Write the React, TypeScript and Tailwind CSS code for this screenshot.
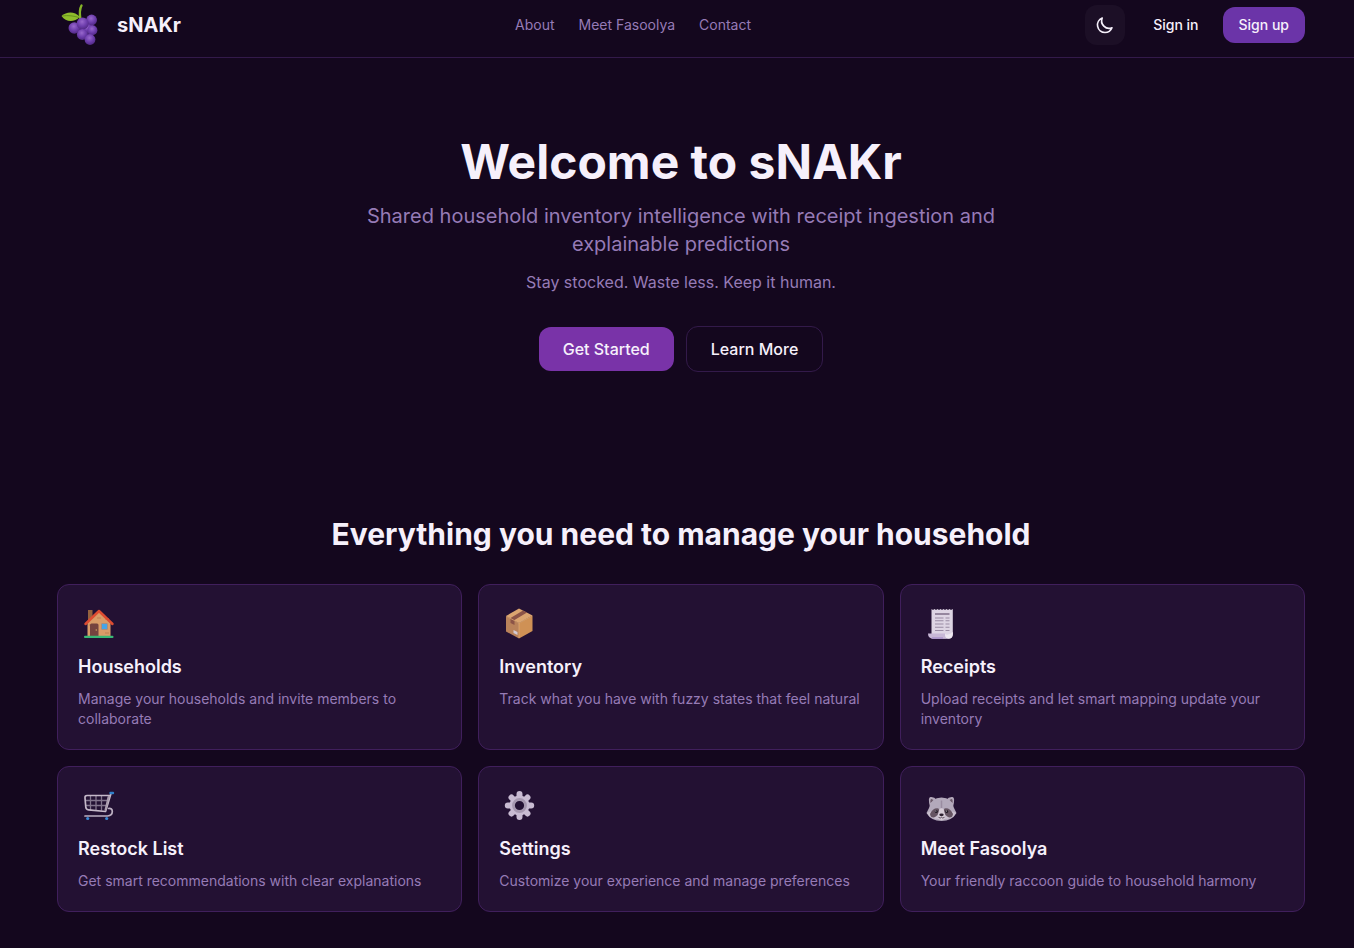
import React from 'react';

interface Feature {
  title: string;
  description: string;
  icon: React.ReactNode;
}

const MoonIcon: React.FC = () => (
  <svg viewBox="0 0 24 24" className="h-5 w-5" fill="none" stroke="currentColor" strokeWidth="2" strokeLinecap="round" strokeLinejoin="round" aria-hidden="true">
    <path d="M20.354 15.354A9 9 0 018.646 3.646 9.003 9.003 0 0012 21a9.003 9.003 0 008.354-5.646z" />
  </svg>
);

const GrapesIcon: React.FC = () => (
  <svg viewBox="0 0 48 48" className="h-12 w-12" aria-hidden="true">
    <defs>
      <radialGradient id="grape" cx="0.45" cy="0.35" r="0.65">
        <stop offset="0" stopColor="#9868cc" />
        <stop offset="0.55" stopColor="#6f3fae" />
        <stop offset="1" stopColor="#512985" />
      </radialGradient>
    </defs>
    <path d="M23.5 19C22.5 13 22.5 8 24.5 4.500" fill="none" stroke="#86b329" strokeWidth="2.4" strokeLinecap="round" />
    <path d="M4.500 15C9 11 17 9.500 23 16C17 21.500 9 21.500 4.500 15Z" fill="#8fbd2c" />
    <path d="M5.500 15C11 14 17 15 22 16.500" fill="none" stroke="#68941c" strokeWidth="1" />
    <path d="M19 24L34 18L38 30L33 40L24 35Z" fill="#4c277c" />
    <g fill="url(#grape)">
      <circle cx="34.600" cy="19" r="5.400" />
      <circle cx="30.500" cy="27.500" r="4.500" />
      <circle cx="35.400" cy="29.300" r="5" />
      <circle cx="17.300" cy="27" r="5.800" />
      <circle cx="25.700" cy="22.500" r="6" />
      <circle cx="25.300" cy="33.500" r="5.400" />
      <circle cx="33" cy="38.500" r="5.400" />
    </g>
  </svg>
);

const HouseIcon: React.FC = () => (
  <svg viewBox="0 0 42 36" className="h-9 w-[42px]" aria-hidden="true">
    <rect x="10" y="5" width="4.500" height="12" fill="#94623f" />
    <path d="M9.500 18L21 6L32.500 18V31H9.500Z" fill="#d99c68" />
    <path d="M11 20h4M27 14h4M27 28h4M19 13h4" stroke="#bd8053" strokeWidth="1" />
    <path d="M7.500 19L21 6L34.500 19" fill="none" stroke="#dd4c31" strokeWidth="2.500" strokeLinecap="round" strokeLinejoin="round" />
    <path d="M12 31V20Q12 18.500 13.500 18.500H19Q20.500 18.500 20.500 20V31Z" fill="#75433f" />
    <circle cx="18.300" cy="25" r="0.800" fill="#cfa15f" />
    <rect x="23.500" y="18.500" width="6" height="6" rx="0.500" fill="#46a5e8" stroke="#b28872" strokeWidth="0.800" />
    <rect x="6" y="30.800" width="29.500" height="2.200" rx="1" fill="#39b875" />
  </svg>
);

const PackageIcon: React.FC = () => (
  <svg viewBox="0 0 42 36" className="h-9 w-[42px]" aria-hidden="true">
    <path d="M20 3.500L33.500 10.500L20 18L7 11Z" fill="#dba570" />
    <path d="M7 11L20 18V33.500L7 26.500Z" fill="#b9825a" />
    <path d="M33.500 10.500L20 18V33.500L33.500 26Z" fill="#cf9155" />
    <path d="M24 5.500L28 7.500L15.500 15V20L11.500 18V13Z" fill="#8c5447" />
    <path d="M20 18V33M7.500 11.300L20 18L33 11" fill="none" stroke="#e0ac76" strokeWidth="0.700" />
    <path d="M14.500 25L18.500 27V30L14.500 28Z" fill="#d4cbd5" />
  </svg>
);

const ReceiptIcon: React.FC = () => (
  <svg viewBox="0 0 42 36" className="h-9 w-[42px]" aria-hidden="true">
    <path d="M10.500 4L12 5L13.500 4L15 5L16.500 4L18 5L19.500 4L21 5L22.500 4L24 5L25.500 4L27 5L28.500 4L30 5L31.800 4V29Q31.800 33.500 28 33.500H10.500Z" fill="#ded5e4" />
    <path d="M7 28.500H24Q23.500 33.800 28 33.800H12Q7 33.500 7 28.500Z" fill="#c8b8d6" />
    <path d="M24 29Q27 31 32 27Q32 33.800 28 33.800Q24 33.500 24 29Z" fill="#eee8f1" />
    <path d="M14 9H28.500" stroke="#7e6c88" strokeWidth="1.500" />
    <path d="M14 13H22.500M24.500 13H28.500M14 15.800H22.500M24.500 15.800H28.500M14 19H22.500M24.500 19H28.500M14 22.300H22.500M24.500 22.300H28.500M14 25.500H22.500M24.500 25.500H28.500" stroke="#998ba3" strokeWidth="1.100" />
    <path d="M11 33H22" stroke="#a48ac8" strokeWidth="1.200" />
  </svg>
);

const CartIcon: React.FC = () => (
  <svg viewBox="0 0 42 36" className="h-9 w-[42px]" aria-hidden="true">
    <g fill="none" strokeLinecap="round" strokeLinejoin="round">
      <path d="M12.500 9V23M18 9V23M23.500 9V23M8 13.500H30M8 18.500H29" stroke="#81748c" strokeWidth="1.300" />
      <path d="M31.500 8.500H9Q6.800 8.500 7 11L7.800 20Q8 22.500 10.500 22.800L27.500 24.500L33 6.500" stroke="#c5b9c9" strokeWidth="1.700" />
      <path d="M30.500 10L27.500 23" stroke="#a99bad" strokeWidth="2" />
      <path d="M7 29H29.500Q34.300 28.500 34.300 24.500Q34.300 21 30.500 21.500" stroke="#bcb0c2" strokeWidth="1.700" />
    </g>
    <path d="M32.500 6H35" stroke="#3281ca" strokeWidth="2.400" strokeLinecap="round" />
    <circle cx="9.700" cy="31.500" r="1.600" fill="#3988d4" />
    <circle cx="28.700" cy="31.500" r="1.600" fill="#3988d4" />
  </svg>
);

const GearIcon: React.FC = () => (
  <svg viewBox="0 0 42 36" className="h-9 w-[42px]" aria-hidden="true">
    <g stroke="#c8bbd2" strokeWidth="6" strokeLinecap="round">
      <path d="M20.500 7V30M8.800 18.500H32.200M12.500 10.500L28.500 26.500M28.500 10.500L12.500 26.500" />
    </g>
    <circle cx="20.500" cy="18.500" r="10" fill="#c8bbd2" />
    <circle cx="20.500" cy="18.500" r="6" fill="#231133" stroke="#a597af" strokeWidth="2.800" />
  </svg>
);

const RaccoonIcon: React.FC = () => (
  <svg viewBox="0 0 42 36" className="h-9 w-[42px]" aria-hidden="true">
    <path d="M9 20Q6.500 10 9.500 10Q13 9.500 16 13ZM32 20Q34.500 10 31.500 10Q28 9.500 25 13Z" fill="#b4a9bb" />
    <path d="M9.500 16Q9 12 10.500 12L13.500 13.500ZM31.500 16Q32 12 30.500 12L27.500 13.500Z" fill="#6b5969" />
    <path d="M20.500 10.500Q31 10.500 33 21L35.500 26Q31 34 20.500 34Q10 34 5.500 26L8 21Q10 10.500 20.500 10.500Z" fill="#b3a9bb" />
    <path d="M6 26Q10 23 14 25L18 32Q9 32 6 26ZM35 26Q31 23 27 25L23 32Q32 32 35 26Z" fill="#c9bfce" />
    <path d="M17.500 21.500Q12 20.500 9 27Q9.500 31 13 30.500Q18 28 18.500 23.500ZM23.500 21.500Q29 20.500 32 27Q31.500 31 28 30.500Q23 28 22.500 23.500Z" fill="#655462" />
    <path d="M20.500 13.500V21" stroke="#9a8ca1" strokeWidth="1.500" />
    <path d="M18.500 22Q20.500 20.500 22.500 22L24 27Q26 32.500 20.500 33Q15 32.500 17 27Z" fill="#d5cbd6" />
    <circle cx="15.300" cy="24.500" r="1.500" fill="#211925" />
    <circle cx="25.700" cy="24.500" r="1.500" fill="#211925" />
    <circle cx="14.900" cy="24" r="0.500" fill="#fff" />
    <circle cx="25.300" cy="24" r="0.500" fill="#fff" />
    <ellipse cx="20.500" cy="27.800" rx="2.200" ry="1.400" fill="#2c202f" />
    <path d="M17.500 30.300Q19.500 31.800 20.500 30.300Q21.500 31.800 23.500 30.300" fill="none" stroke="#4d3e4e" strokeWidth="0.900" />
  </svg>
);

const features: Feature[] = [
  { title: 'Households', description: 'Manage your households and invite members to collaborate', icon: <HouseIcon /> },
  { title: 'Inventory', description: 'Track what you have with fuzzy states that feel natural', icon: <PackageIcon /> },
  { title: 'Receipts', description: 'Upload receipts and let smart mapping update your inventory', icon: <ReceiptIcon /> },
  { title: 'Restock List', description: 'Get smart recommendations with clear explanations', icon: <CartIcon /> },
  { title: 'Settings', description: 'Customize your experience and manage preferences', icon: <GearIcon /> },
  { title: 'Meet Fasoolya', description: 'Your friendly raccoon guide to household harmony', icon: <RaccoonIcon /> },
];

const Header: React.FC = () => (
  <header className="border-b border-[#331a4a] pt-[5px] pb-3 pl-2">
    <div className="mx-auto flex h-10 max-w-7xl items-center justify-between px-4">
      <a href="#" className="flex items-center gap-3">
        <GrapesIcon />
        <span className="text-xl font-bold">sNAKr</span>
      </a>

      <nav className="flex items-center gap-6 text-sm text-[#967bb6]">
        <a href="#about">About</a>
        <a href="#fasoolya">Meet Fasoolya</a>
        <a href="#contact">Contact</a>
      </nav>

      <div className="flex items-center gap-2 text-sm font-medium">
        <button type="button" aria-label="Toggle theme" className="mr-1 flex h-10 w-10 items-center justify-center rounded-xl bg-[#1c0f26]">
          <MoonIcon />
        </button>
        <button type="button" className="rounded-xl px-4 py-2">Sign in</button>
        <button type="button" className="rounded-xl bg-[#6b34a8] px-4 py-2">Sign up</button>
      </div>
    </div>
  </header>
);

const FeatureCard: React.FC<{ feature: Feature }> = ({ feature }) => (
  <a href="#" className="block rounded-xl border border-[#401f5c] bg-[#231133] p-5">
    <div className="mb-3">{feature.icon}</div>
    <h3 className="mb-2 text-lg font-semibold">{feature.title}</h3>
    <p className="text-sm text-[#967bb6]">{feature.description}</p>
  </a>
);

const App: React.FC = () => (
  <div className="min-h-screen bg-[#14071e] font-['Inter',sans-serif] text-[#f6f0fb]">
    <Header />

    <main className="pl-2">
      {/* Hero */}
      <section className="mx-auto max-w-7xl px-4 py-20 text-center">
        <h1 className="text-5xl font-bold">Welcome to sNAKr</h1>
        <p className="mx-auto mt-4 max-w-2xl text-xl text-[#967bb6]">
          Shared household inventory intelligence with receipt ingestion and explainable predictions
        </p>
        <p className="mt-3 text-[#967bb6]">Stay stocked. Waste less. Keep it human.</p>
        <div className="mt-8 flex items-center justify-center gap-3 font-medium">
          <button type="button" className="rounded-xl bg-[#7933a8] px-6 py-[10px]">Get Started</button>
          <button type="button" className="rounded-xl border border-[#331a4a] px-6 py-[10px]">Learn More</button>
        </div>
      </section>

      {/* Features */}
      <section className="mx-auto max-w-7xl px-4 pt-16 pb-9">
        <h2 className="mb-8 text-center text-3xl font-bold">Everything you need to manage your household</h2>
        <div className="grid grid-cols-1 gap-4 sm:grid-cols-2 lg:grid-cols-3">
          {features.map(feature => (
            <FeatureCard key={feature.title} feature={feature} />
          ))}
        </div>
      </section>
    </main>
  </div>
);

export default App;
